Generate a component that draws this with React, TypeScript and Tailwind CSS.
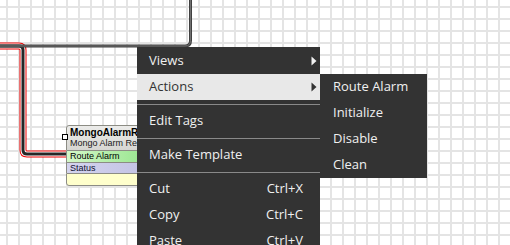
import React from 'react';

type Item =
  | { kind: 'item'; label: string; shortcut?: string; submenu?: boolean; active?: boolean }
  | { kind: 'sep' };

const mainItems: Item[] = [
  { kind: 'item', label: 'Views', submenu: true },
  { kind: 'item', label: 'Actions', submenu: true, active: true },
  { kind: 'sep' },
  { kind: 'item', label: 'Edit Tags' },
  { kind: 'sep' },
  { kind: 'item', label: 'Make Template' },
  { kind: 'sep' },
  { kind: 'item', label: 'Cut', shortcut: 'Ctrl+X' },
  { kind: 'item', label: 'Copy', shortcut: 'Ctrl+C' },
  { kind: 'item', label: 'Paste', shortcut: 'Ctrl+V' },
];

const actions = ['Route Alarm', 'Initialize', 'Disable', 'Clean'];

const Arrow = ({ dark }: { dark?: boolean }) => (
  <svg width="6" height="10" viewBox="0 0 6 10" className="mr-[3px] shrink-0">
    <path d="M0.5 0.5 L5.5 5 L0.5 9.5 Z" fill={dark ? '#333333' : '#f2f2f2'} />
  </svg>
);

const link = 'M0 46 H19 Q23 46 23 50 V150 Q23 154 27 154 H66';
const upWire = 'M0 46 H185 Q190.5 46 190.5 40.5 V0';

const Wires = () => (
  <svg width="510" height="245" className="absolute inset-0" fill="none">
    {/* link into the node */}
    <path d={link} stroke="#ee0000" strokeWidth="7" />
    <path d={link} stroke="#ffffff" strokeWidth="5" />
    <path d={link} stroke="#262626" strokeWidth="3" />
    {/* wire going up */}
    <path d={upWire} stroke="#404040" strokeWidth="3" />
    <path d={upWire} stroke="#707070" strokeWidth="1" />
  </svg>
);

const Node = () => (
  <div className="absolute left-[66px] top-[125px] w-[110px] font-['Liberation_Sans',sans-serif] text-[9px] leading-[10px] text-black">
    <div className="rounded-tl-[3px] border border-[#8c8c84] bg-gradient-to-b from-[#ececea] to-[#d6d6d2] px-[3px] pt-[2px] h-[26px]">
      <div className="text-[10px] font-bold leading-[10px] whitespace-nowrap">MongoAlarmReceiver</div>
      <div className="whitespace-nowrap text-[#202020]">Mongo Alarm Receiver</div>
    </div>
    <div className="border-x border-[#8c8c84] bg-gradient-to-r from-[#d4f8c8] to-[#7ede78] h-[11px] px-[3px] leading-[11px]">Route Alarm</div>
    <div className="border-x border-t border-[#8c8c84] bg-gradient-to-r from-[#d4d4ee] to-[#bcbce0] h-[11px] px-[3px] leading-[11px] text-[#101030]">Status</div>
    <div className="rounded-bl-[3px] border border-[#8c8c84] bg-[#ffffcc] h-[13px]" />
    <div className="absolute left-[-4px] top-[9px] h-[6px] w-[6px] border border-black bg-white" />
  </div>
);

const MenuRow = ({ item }: { item: Item }) => {
  if (item.kind === 'sep') {
    return (
      <div className="flex h-2 items-center">
        <div className="h-px w-full bg-[#8a8a8a]" />
      </div>
    );
  }
  return (
    <div className={`flex h-[26px] items-center pl-3 ${item.active ? 'bg-[#e8e8e8] text-[#333333]' : 'text-[#f0f0f0]'}`}>
      <span className="whitespace-nowrap">{item.label}</span>
      <span className="flex-1" />
      {item.shortcut && <span className="mr-[17px] whitespace-nowrap">{item.shortcut}</span>}
      {item.submenu && <Arrow dark={item.active} />}
    </div>
  );
};

export default function App() {
  return (
    <div className="relative h-[245px] w-[510px] overflow-hidden bg-white bg-[linear-gradient(to_right,#e4e4e4_2px,transparent_2px),linear-gradient(to_bottom,#e4e4e4_2px,transparent_2px)] bg-[size:12px_12px] bg-[position:6px_6px]">
      <Wires />
      <Node />
      <div className="absolute left-[137px] top-[47px] w-[183px] bg-[#333333] pt-px font-['Open_Sans',sans-serif] text-[13px]">
        {mainItems.map((it, i) => (
          <MenuRow key={i} item={it} />
        ))}
      </div>
      <div className="absolute left-[320px] top-[74px] w-[107px] bg-[#333333] font-['Open_Sans',sans-serif] text-[13px] text-[#f0f0f0]">
        {actions.map((a) => (
          <div key={a} className="flex h-[26px] items-center pl-[13px] whitespace-nowrap">
            {a}
          </div>
        ))}
      </div>
    </div>
  );
}
